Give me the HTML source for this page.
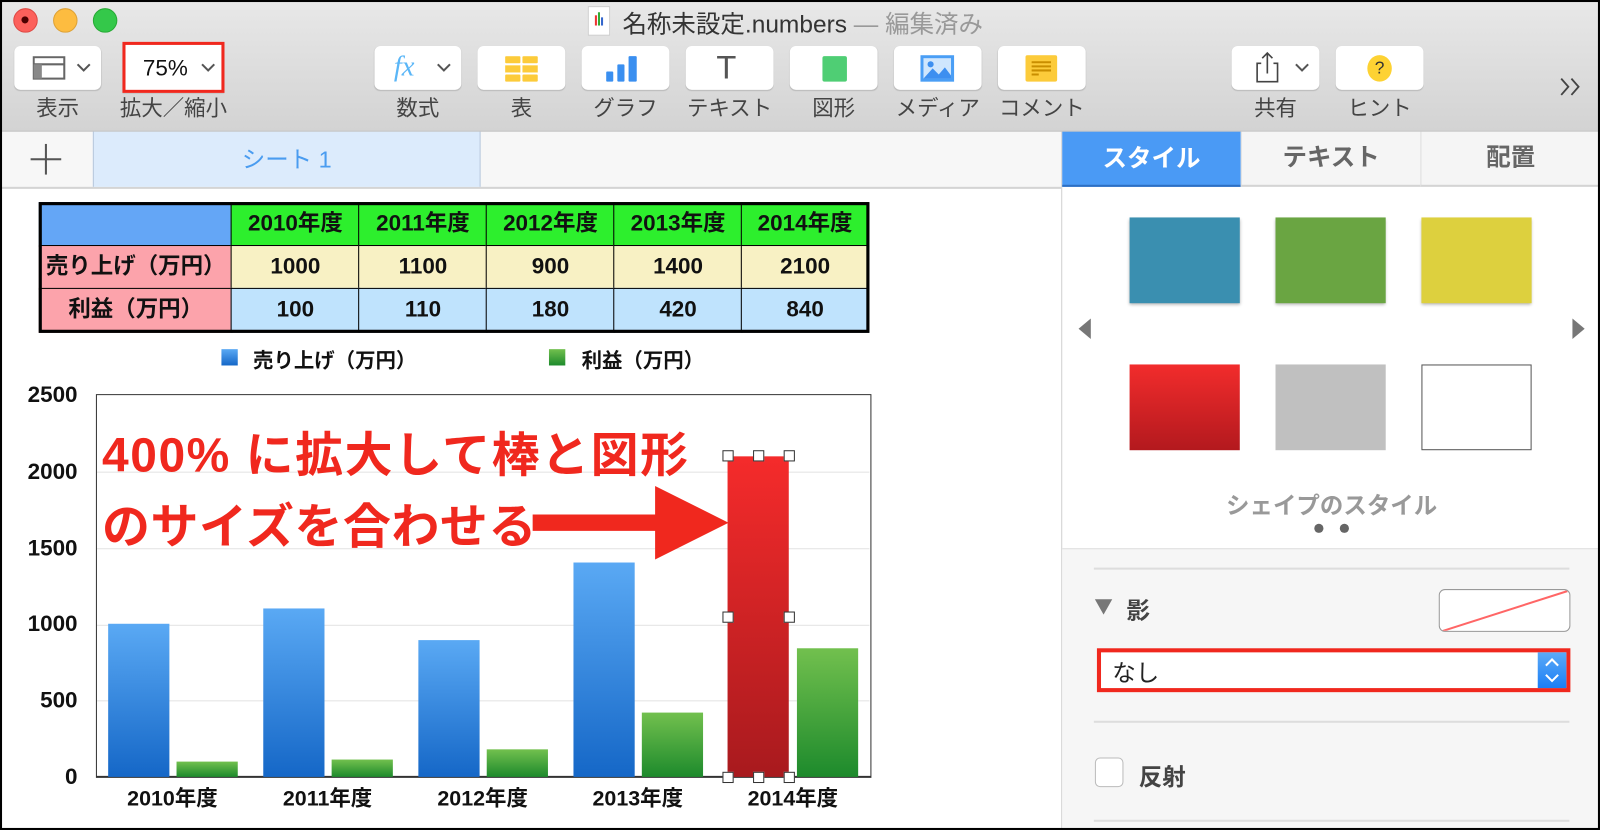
<!DOCTYPE html>
<html><head><meta charset="utf-8"><style>
html,body{margin:0;padding:0;width:1600px;height:830px;overflow:hidden;background:#000}
#w{position:absolute;left:0;top:0;width:1568px;height:813px;transform:scale(1.0204,1.0209);transform-origin:0 0;background:#fff;overflow:hidden;font-family:"Liberation Sans","Noto Sans CJK JP",sans-serif}
.a{position:absolute}
.btn{position:absolute;top:45px;height:43px;background:#fff;border-radius:6px;box-shadow:0 1px 1px rgba(0,0,0,.15)}
.lbl{position:absolute;top:90px;font-size:21px;color:#444;text-align:center}
.td{position:absolute;box-sizing:border-box;border:1.5px solid #000;font-weight:bold;font-size:22px;text-align:center;line-height:40px;color:#111}
.grid{position:absolute;left:95px;width:757px;height:1px;background:#e3e3e3}
.yl{position:absolute;left:0;width:76px;text-align:right;font-size:22px;font-weight:bold;color:#111}
.xl{position:absolute;top:766px;width:152px;text-align:center;font-size:21px;font-weight:bold;color:#111}
.blue{position:absolute;width:60px;background:linear-gradient(#5aa9f4,#1567c7)}
.green{position:absolute;width:60px;background:linear-gradient(#72c04e,#1d8a2c)}
.h{position:absolute;width:9px;height:9px;background:#fff;border:1px solid #333}
</style></head><body><div id="w">
<div class="a" style="left:0;top:0;width:1568px;height:128px;background:linear-gradient(#e8e8e8,#d3d3d3);border-bottom:1px solid #b5b5b5"></div>
<div class="a" style="left:13px;top:8px;width:22px;height:22px;border-radius:50%;background:#fc605b;border:1px solid #de4a45"></div>
<div class="a" style="left:21px;top:16px;width:7px;height:7px;border-radius:50%;background:#4d0000"></div>
<div class="a" style="left:52px;top:8px;width:22px;height:22px;border-radius:50%;background:#fdbc40;border:1px solid #dea236"></div>
<div class="a" style="left:91px;top:8px;width:22px;height:22px;border-radius:50%;background:#34c84a;border:1px solid #27aa35"></div>
<div class="a" style="left:576px;top:6px;width:20px;height:27px;background:#fff;border:1px solid #ccc"></div>
<div class="a" style="left:583px;top:15px;width:2px;height:10px;background:#e33"></div><div class="a" style="left:586px;top:12px;width:2px;height:13px;background:#3a3"></div><div class="a" style="left:589px;top:17px;width:2px;height:8px;background:#36c"></div>
<div class="a" style="left:610px;top:4px;font-size:24px;color:#333">名称未設定.numbers <span style="color:#999">— 編集済み</span></div>

<div class="btn" style="left:14px;width:85px"></div>
<svg class="a" style="left:32px;top:55px" width="34" height="24"><rect x="1" y="1" width="30" height="21" fill="none" stroke="#666" stroke-width="2"/><line x1="1" y1="8" x2="31" y2="8" stroke="#666" stroke-width="2"/><rect x="1" y="8" width="8" height="14" fill="#888"/></svg>
<svg class="a" style="left:74px;top:61px" width="16" height="10"><path d="M2 2l6 6 6-6" fill="none" stroke="#555" stroke-width="2"/></svg>
<div class="lbl" style="left:14px;width:85px">表示</div>
<div class="btn" style="left:120px;width:100px;border-radius:0;border:3px solid #f0281e;box-sizing:border-box;top:41px;height:50px"></div>
<div class="a" style="left:140px;top:54px;font-size:22px;color:#111">75%</div>
<svg class="a" style="left:196px;top:61px" width="16" height="10"><path d="M2 2l6 6 6-6" fill="none" stroke="#555" stroke-width="2"/></svg>
<div class="lbl" style="left:110px;width:120px">拡大／縮小</div>

<div class="btn" style="left:367px;width:85px"></div>
<div class="a" style="left:386px;top:50px;font-size:28px;font-style:italic;color:#5ab6f7;font-family:'Liberation Serif',serif">fx</div>
<svg class="a" style="left:427px;top:61px" width="16" height="10"><path d="M2 2l6 6 6-6" fill="none" stroke="#555" stroke-width="2"/></svg>
<div class="lbl" style="left:367px;width:85px">数式</div>
<div class="btn" style="left:468px;width:86px"></div>
<svg class="a" style="left:495px;top:55px" width="34" height="26"><g fill="#fccb3a"><rect x="0" y="0" width="15" height="7" rx="1"/><rect x="17" y="0" width="15" height="7" rx="1"/><rect x="0" y="9" width="15" height="7"/><rect x="17" y="9" width="15" height="7"/><rect x="0" y="18" width="15" height="7" rx="1"/><rect x="17" y="18" width="15" height="7" rx="1"/></g></svg>
<div class="lbl" style="left:468px;width:86px">表</div>
<div class="btn" style="left:570px;width:86px"></div>
<svg class="a" style="left:594px;top:53px" width="36" height="28"><g fill="#3a8ff0"><rect x="0" y="17" width="7" height="10" rx="1"/><rect x="11" y="10" width="7" height="17" rx="1"/><rect x="22" y="2" width="8" height="25" rx="1"/></g></svg>
<div class="lbl" style="left:570px;width:86px">グラフ</div>
<div class="btn" style="left:672px;width:86px"></div>
<div class="a" style="left:702px;top:48px;font-size:32px;color:#555">T</div>
<div class="lbl" style="left:665px;width:100px">テキスト</div>
<div class="btn" style="left:774px;width:86px"></div>
<div class="a" style="left:806px;top:55px;width:24px;height:25px;background:#4fce74;border-radius:2px"></div>
<div class="lbl" style="left:774px;width:86px">図形</div>
<div class="btn" style="left:876px;width:86px"></div>
<svg class="a" style="left:902px;top:54px" width="34" height="27"><rect x="0" y="0" width="33" height="26" fill="#4a9ef5"/><rect x="3" y="3" width="27" height="20" fill="#cfe6fd"/><path d="M3 23 L12 13 L18 19 L24 12 L30 20 L30 23Z" fill="#3d8ff0"/><circle cx="10" cy="9" r="3" fill="#3d8ff0"/></svg>
<div class="lbl" style="left:868px;width:102px">メディア</div>
<div class="btn" style="left:978px;width:86px"></div>
<svg class="a" style="left:1005px;top:54px" width="32" height="28"><rect x="0" y="0" width="31" height="26" rx="2" fill="#fccb3a"/><g stroke="#c98e00" stroke-width="2"><line x1="6" y1="7" x2="25" y2="7"/><line x1="6" y1="11" x2="25" y2="11"/><line x1="6" y1="15" x2="25" y2="15"/><line x1="6" y1="19" x2="13" y2="19"/></g></svg>
<div class="lbl" style="left:970px;width:102px">コメント</div>
<div class="btn" style="left:1207px;width:86px"></div>
<svg class="a" style="left:1230px;top:50px" width="24" height="32"><path d="M6 12 H2 V30 H22 V12 H18" fill="none" stroke="#444" stroke-width="1.6"/><path d="M12 22 V2 M7 7 L12 2 L17 7" fill="none" stroke="#444" stroke-width="1.6"/></svg>
<svg class="a" style="left:1268px;top:61px" width="16" height="10"><path d="M2 2l6 6 6-6" fill="none" stroke="#555" stroke-width="2"/></svg>
<div class="lbl" style="left:1207px;width:86px">共有</div>
<div class="btn" style="left:1309px;width:86px"></div>
<div class="a" style="left:1340px;top:54px;width:24px;height:26px;border-radius:50%;background:#fdd233;text-align:center;font-size:17px;line-height:26px;color:#333">?</div>
<div class="lbl" style="left:1309px;width:86px">ヒント</div>
<svg class="a" style="left:1527px;top:75px" width="26" height="20"><path d="M3 2 L10 10 L3 18 M13 2 L20 10 L13 18" fill="none" stroke="#444" stroke-width="1.8"/></svg>

<div class="a" style="left:0;top:129px;width:1040px;height:54px;background:#f7f7f7;border-bottom:2px solid #d4d4d4"></div>
<div class="a" style="left:30px;top:155px;width:30px;height:2px;background:#555"></div>
<div class="a" style="left:44px;top:141px;width:2px;height:30px;background:#555"></div>
<div class="a" style="left:91px;top:129px;width:378px;height:54px;background:#dcebfc;border-left:1px solid #b8c8dc;border-right:1px solid #b8c8dc;text-align:center;font-size:23px;line-height:54px;color:#4a9cf0">シート 1</div>

<div class="a" style="left:1040px;top:129px;width:528px;height:684px;background:#fff;border-left:1px solid #d0d0d0"></div>
<div class="a" style="left:1041px;top:129px;width:175px;height:54px;background:#4a9af5;color:#fff;font-weight:bold;font-size:24px;text-align:center;line-height:54px;border-bottom:2px solid #2d6fc2;box-sizing:border-box">スタイル</div>
<div class="a" style="left:1216px;top:129px;width:176px;height:54px;background:#f5f5f5;border-left:1px solid #ddd;border-bottom:2px solid #d4d4d4;box-sizing:border-box;color:#666;font-weight:bold;font-size:24px;text-align:center;line-height:52px">テキスト</div>
<div class="a" style="left:1392px;top:129px;width:176px;height:54px;background:#f5f5f5;border-left:1px solid #ddd;border-bottom:2px solid #d4d4d4;box-sizing:border-box;color:#666;font-weight:bold;font-size:24px;text-align:center;line-height:52px">配置</div>
<div class="a" style="left:1107px;top:213px;width:108px;height:84px;background:#3a8fb0;box-shadow:0 2px 3px rgba(0,0,0,.3)"></div>
<div class="a" style="left:1250px;top:213px;width:108px;height:84px;background:#6aa542;box-shadow:0 2px 3px rgba(0,0,0,.3)"></div>
<div class="a" style="left:1393px;top:213px;width:108px;height:84px;background:#ddd03e;box-shadow:0 2px 3px rgba(0,0,0,.3)"></div>
<div class="a" style="left:1107px;top:357px;width:108px;height:84px;background:linear-gradient(#f22c2c,#b3191e)"></div>
<div class="a" style="left:1250px;top:357px;width:108px;height:84px;background:#c0c0c0"></div>
<div class="a" style="left:1393px;top:357px;width:108px;height:84px;box-sizing:border-box;border:1.5px solid #555;background:#fff"></div>
<svg class="a" style="left:1056px;top:311px" width="14" height="22"><path d="M13 1 L1 11 L13 21Z" fill="#777"/></svg>
<svg class="a" style="left:1540px;top:311px" width="14" height="22"><path d="M1 1 L13 11 L1 21Z" fill="#777"/></svg>
<div class="a" style="left:1160px;top:476px;width:290px;text-align:center;font-size:23px;font-weight:bold;color:#999">シェイプのスタイル</div>
<div class="a" style="left:1288px;top:513px;width:9px;height:9px;border-radius:50%;background:#666"></div>
<div class="a" style="left:1313px;top:513px;width:9px;height:9px;border-radius:50%;background:#666"></div>
<div class="a" style="left:1041px;top:537px;width:527px;height:276px;background:#f6f6f6;border-top:1px solid #ddd"></div>
<div class="a" style="left:1072px;top:556px;width:466px;height:2px;background:#ddd"></div>
<svg class="a" style="left:1072px;top:586px" width="20" height="18"><path d="M1 1 H18 L9.5 16Z" fill="#777"/></svg>
<div class="a" style="left:1104px;top:579px;font-size:23px;font-weight:bold;color:#444">影</div>
<div class="a" style="left:1410px;top:577px;width:127px;height:40px;border:1px solid #999;border-radius:6px;background:#fff;overflow:hidden"><svg width="127" height="40"><line x1="3" y1="40" x2="125" y2="1" stroke="#f66" stroke-width="2"/></svg></div>
<div class="a" style="left:1075px;top:635px;width:464px;height:43px;border:4px solid #f0281e;box-sizing:border-box;background:#fff"></div>
<div class="a" style="left:1090px;top:640px;font-size:23px;color:#222">なし</div>
<div class="a" style="left:1507px;top:639px;width:28px;height:35px;background:linear-gradient(#5caaf7,#1a7ef5)"></div>
<svg class="a" style="left:1512px;top:642px" width="18" height="30"><path d="M3 10 L9 4 L15 10 M3 19 L9 25 L15 19" fill="none" stroke="#fff" stroke-width="2"/></svg>
<div class="a" style="left:1072px;top:706px;width:466px;height:2px;background:#ddd"></div>
<div class="a" style="left:1073px;top:742px;width:26px;height:27px;border:1px solid #bbb;border-radius:5px;background:#fff"></div>
<div class="a" style="left:1116px;top:742px;font-size:23px;font-weight:bold;color:#444">反射</div>
<div class="a" style="left:1072px;top:803px;width:466px;height:2px;background:#ddd"></div>

<div class="td" style="left:38px;top:198px;width:190px;height:44px;background:#64a6f6"></div>
<div class="td" style="left:226px;top:198px;width:127px;height:44px;background:#2def2d">2010年度</div>
<div class="td" style="left:351px;top:198px;width:127px;height:44px;background:#2def2d">2011年度</div>
<div class="td" style="left:476px;top:198px;width:127px;height:44px;background:#2def2d">2012年度</div>
<div class="td" style="left:601px;top:198px;width:127px;height:44px;background:#2def2d">2013年度</div>
<div class="td" style="left:726px;top:198px;width:126px;height:44px;background:#2def2d">2014年度</div>
<div class="td" style="left:38px;top:240px;width:190px;height:44px;background:#fca3ab">売り上げ（万円）</div>
<div class="td" style="left:226px;top:240px;width:127px;height:44px;background:#f8f1c4">1000</div>
<div class="td" style="left:351px;top:240px;width:127px;height:44px;background:#f8f1c4">1100</div>
<div class="td" style="left:476px;top:240px;width:127px;height:44px;background:#f8f1c4">900</div>
<div class="td" style="left:601px;top:240px;width:127px;height:44px;background:#f8f1c4">1400</div>
<div class="td" style="left:726px;top:240px;width:126px;height:44px;background:#f8f1c4">2100</div>
<div class="td" style="left:38px;top:282px;width:190px;height:44px;background:#fca3ab">利益（万円）</div>
<div class="td" style="left:226px;top:282px;width:127px;height:44px;background:#bfe3fd">100</div>
<div class="td" style="left:351px;top:282px;width:127px;height:44px;background:#bfe3fd">110</div>
<div class="td" style="left:476px;top:282px;width:127px;height:44px;background:#bfe3fd">180</div>
<div class="td" style="left:601px;top:282px;width:127px;height:44px;background:#bfe3fd">420</div>
<div class="td" style="left:726px;top:282px;width:126px;height:44px;background:#bfe3fd">840</div>
<div class="a" style="left:38px;top:198px;width:814px;height:128px;border:3px solid #000;box-sizing:border-box"></div>

<div class="a" style="left:217px;top:342px;width:16px;height:16px;background:linear-gradient(#5aa9f4,#1567c7)"></div>
<div class="a" style="left:248px;top:337px;font-size:20px;font-weight:bold;color:#111">売り上げ（万円）</div>
<div class="a" style="left:538px;top:342px;width:16px;height:16px;background:linear-gradient(#72c04e,#1d8a2c)"></div>
<div class="a" style="left:570px;top:337px;font-size:20px;font-weight:bold;color:#111">利益（万円）</div>

<div class="grid" style="top:462px"></div><div class="grid" style="top:537px"></div><div class="grid" style="top:612px"></div><div class="grid" style="top:686px"></div>
<div class="a" style="left:94px;top:386px;width:760px;height:376px;border:1.5px solid #333;border-bottom:2px solid #333;box-sizing:border-box"></div>
<div class="yl" style="top:374px">2500</div><div class="yl" style="top:449px">2000</div><div class="yl" style="top:524px">1500</div><div class="yl" style="top:598px">1000</div><div class="yl" style="top:673px">500</div><div class="yl" style="top:748px">0</div>
<div class="blue" style="left:106px;top:611px;height:150px"></div>
<div class="green" style="left:173px;top:746px;height:15px"></div>
<div class="blue" style="left:258px;top:596px;height:165px"></div>
<div class="green" style="left:325px;top:744px;height:17px"></div>
<div class="blue" style="left:410px;top:627px;height:134px"></div>
<div class="green" style="left:477px;top:734px;height:27px"></div>
<div class="blue" style="left:562px;top:551px;height:210px"></div>
<div class="green" style="left:629px;top:698px;height:63px"></div>
<div class="a" style="left:713px;top:447px;width:60px;height:314px;background:linear-gradient(#f52b2b,#a81a1e)"></div>
<div class="green" style="left:781px;top:635px;height:126px"></div>
<div class="h" style="left:708px;top:441px"></div><div class="h" style="left:738px;top:441px"></div><div class="h" style="left:768px;top:441px"></div>
<div class="h" style="left:708px;top:599px"></div><div class="h" style="left:768px;top:599px"></div>
<div class="h" style="left:708px;top:756px"></div><div class="h" style="left:738px;top:756px"></div><div class="h" style="left:768px;top:756px"></div>
<div class="xl" style="left:93px">2010年度</div><div class="xl" style="left:245px">2011年度</div><div class="xl" style="left:397px">2012年度</div><div class="xl" style="left:549px">2013年度</div><div class="xl" style="left:701px">2014年度</div>

<div class="a" style="left:100px;top:407px;font-size:47px;font-weight:bold;color:#f0281e;white-space:nowrap;letter-spacing:1.5px">400% に拡大して棒と図形</div>
<div class="a" style="left:100px;top:477px;font-size:47px;font-weight:bold;color:#f0281e;white-space:nowrap;letter-spacing:0.5px">のサイズを合わせる</div>
<svg class="a" style="left:520px;top:474px" width="196" height="76"><path d="M2 30 H122 V2 L194 38 L122 74 V46 H2Z" fill="#f0281e"/></svg>
<div class="a" style="left:0;top:0;width:1568px;height:813px;box-sizing:border-box;border:2px solid #000;border-top-width:2px"></div>
</div></body></html>
